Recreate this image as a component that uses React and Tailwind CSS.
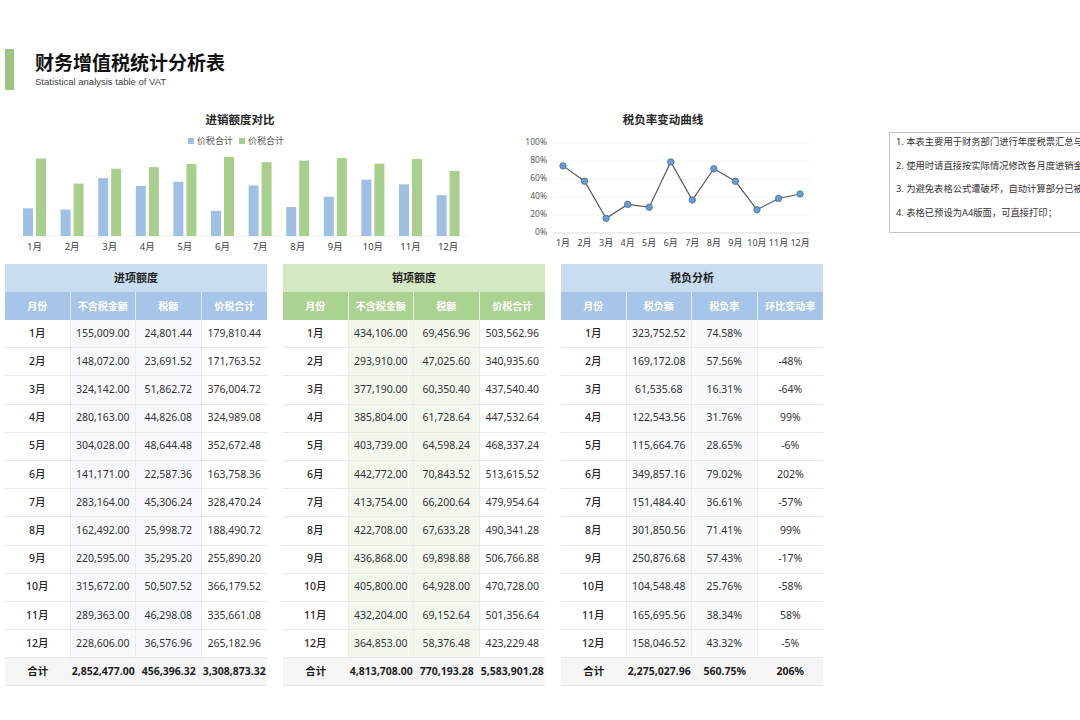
import React from "react";

const inRows = [
  ["1月", "155,009.00", "24,801.44", "179,810.44"],
  ["2月", "148,072.00", "23,691.52", "171,763.52"],
  ["3月", "324,142.00", "51,862.72", "376,004.72"],
  ["4月", "280,163.00", "44,826.08", "324,989.08"],
  ["5月", "304,028.00", "48,644.48", "352,672.48"],
  ["6月", "141,171.00", "22,587.36", "163,758.36"],
  ["7月", "283,164.00", "45,306.24", "328,470.24"],
  ["8月", "162,492.00", "25,998.72", "188,490.72"],
  ["9月", "220,595.00", "35,295.20", "255,890.20"],
  ["10月", "315,672.00", "50,507.52", "366,179.52"],
  ["11月", "289,363.00", "46,298.08", "335,661.08"],
  ["12月", "228,606.00", "36,576.96", "265,182.96"],
];
const inTotal = ["合计", "2,852,477.00", "456,396.32", "3,308,873.32"];

const outRows = [
  ["1月", "434,106.00", "69,456.96", "503,562.96"],
  ["2月", "293,910.00", "47,025.60", "340,935.60"],
  ["3月", "377,190.00", "60,350.40", "437,540.40"],
  ["4月", "385,804.00", "61,728.64", "447,532.64"],
  ["5月", "403,739.00", "64,598.24", "468,337.24"],
  ["6月", "442,772.00", "70,843.52", "513,615.52"],
  ["7月", "413,754.00", "66,200.64", "479,954.64"],
  ["8月", "422,708.00", "67,633.28", "490,341.28"],
  ["9月", "436,868.00", "69,898.88", "506,766.88"],
  ["10月", "405,800.00", "64,928.00", "470,728.00"],
  ["11月", "432,204.00", "69,152.64", "501,356.64"],
  ["12月", "364,853.00", "58,376.48", "423,229.48"],
];
const outTotal = ["合计", "4,813,708.00", "770,193.28", "5,583,901.28"];

const taxRows = [
  ["1月", "323,752.52", "74.58%", ""],
  ["2月", "169,172.08", "57.56%", "-48%"],
  ["3月", "61,535.68", "16.31%", "-64%"],
  ["4月", "122,543.56", "31.76%", "99%"],
  ["5月", "115,664.76", "28.65%", "-6%"],
  ["6月", "349,857.16", "79.02%", "202%"],
  ["7月", "151,484.40", "36.61%", "-57%"],
  ["8月", "301,850.56", "71.41%", "99%"],
  ["9月", "250,876.68", "57.43%", "-17%"],
  ["10月", "104,548.48", "25.76%", "-58%"],
  ["11月", "165,695.56", "38.34%", "58%"],
  ["12月", "158,046.52", "43.32%", "-5%"],
];
const taxTotal = ["合计", "2,275,027.96", "560.75%", "206%"];

const months = ["1月", "2月", "3月", "4月", "5月", "6月", "7月", "8月", "9月", "10月", "11月", "12月"];
const inSum = [179810.44, 171763.52, 376004.72, 324989.08, 352672.48, 163758.36, 328470.24, 188490.72, 255890.2, 366179.52, 335661.08, 265182.96];
const outSum = [503562.96, 340935.6, 437540.4, 447532.64, 468337.24, 513615.52, 479954.64, 490341.28, 506766.88, 470728.0, 501356.64, 423229.48];
const rates = [74.58, 57.56, 16.31, 31.76, 28.65, 79.02, 36.61, 71.41, 57.43, 25.76, 38.34, 43.32];

function BarChart() {
  const base = 88;
  const scale = 79 / 513615;
  return (
    <div className="w-[460px]">
      <div className="text-center text-[11.5px] font-bold leading-[20px] text-[#262626]">进销额度对比</div>
      <div className="mt-[4px] flex h-[14px] items-center justify-center gap-[6px] pr-[8px] text-[9px] text-[#595959]">
        <span className="flex items-center gap-[3px]">
          <span className="h-[6px] w-[6px] bg-[#9fbfe3]" />
          价税合计
        </span>
        <span className="flex items-center gap-[3px]">
          <span className="h-[6px] w-[6px] bg-[#a9cf8c]" />
          价税合计
        </span>
      </div>
      <svg width="460" height="110" className="block">
        <line x1="6" x2="458" y1={base} y2={base} stroke="#ececec" strokeWidth="1" />
        {months.map((m, i) => {
          const c = 24.5 + i * 37.6;
          const hb = inSum[i] * scale;
          const hg = outSum[i] * scale;
          return (
            <g key={m}>
              <rect x={c - 11.5} y={base - hb} width="10" height={hb} fill="#9fbfe3" />
              <rect x={c + 1.5} y={base - hg} width="10" height={hg} fill="#a9cf8c" />
              <text x={c} y={base + 11} textAnchor="middle" dominantBaseline="middle" fontSize="9.5" fill="#404040">
                {m}
              </text>
            </g>
          );
        })}
      </svg>
    </div>
  );
}

function LineChart() {
  const px = (i) => 48 + i * 21.55;
  const py = (v) => 103 - v * 0.9;
  const pts = rates.map((v, i) => `${px(i)},${py(v)}`).join(" ");
  return (
    <div className="ml-[45px] w-[300px]">
      <div className="pr-[4px] text-center text-[11.5px] font-bold leading-[20px] text-[#262626]">税负率变动曲线</div>
      <svg width="300" height="125" className="block">
        {[0, 20, 40, 60, 80, 100].map((v) => (
          <g key={v}>
            {v > 0 && <line x1="38" x2="295" y1={py(v)} y2={py(v)} stroke="#f4f4f4" strokeWidth="1" />}
            <text x="32" y={py(v)} textAnchor="end" dominantBaseline="middle" fontSize="8.5" fill="#595959">
              {v}%
            </text>
          </g>
        ))}
        <line x1="38" x2="295" y1={py(0)} y2={py(0)} stroke="#d9d9d9" strokeWidth="1" />
        <polyline points={pts} fill="none" stroke="#5a5a5a" strokeWidth="1.2" />
        {rates.map((v, i) => (
          <circle key={i} cx={px(i)} cy={py(v)} r="3.2" fill="#6b9bcf" stroke="#41719c" strokeWidth="0.8" />
        ))}
        {months.map((m, i) => (
          <text key={m} x={px(i)} y="114" textAnchor="middle" dominantBaseline="middle" fontSize="9" fill="#404040">
            {m}
          </text>
        ))}
      </svg>
    </div>
  );
}

function Notes() {
  const lines = [
    "1. 本表主要用于财务部门进行年度税票汇总与统计分析；",
    "2. 使用时请直接按实际情况修改各月度进销金额数据；",
    "3. 为避免表格公式遭破坏，自动计算部分已被锁定保护；",
    "4. 表格已预设为A4版面，可直接打印；",
  ];
  return (
    <div className="ml-[74px] mt-[22px] h-[101px] w-[230px] shrink-0 border border-[#c4c4c4] pl-[6px] pt-[2px]">
      {lines.map((l) => (
        <p key={l} className="mb-[9.7px] whitespace-nowrap text-[9.3px] leading-[14px] text-[#333]">
          {l}
        </p>
      ))}
    </div>
  );
}

function DataTable({ title, heads, rows, total, light, dark, tint }) {
  return (
    <div className="w-[262px] shrink-0">
      <div className={`flex h-[28px] items-center justify-center text-[11px] font-bold text-[#1f1f1f] ${light}`}>{title}</div>
      <div className={`grid h-[28px] grid-cols-4 ${dark}`}>
        {heads.map((h, i) => (
          <div
            key={h}
            className={`flex items-center justify-center text-[10px] font-bold text-white ${i < 3 ? "border-r border-white/70" : ""}`}
          >
            {h}
          </div>
        ))}
      </div>
      {rows.map((r) => (
        <div key={r[0]} className="grid h-[28.2px] grid-cols-4 border-b border-[#e8e8e8] text-[10.5px] text-[#333]">
          {r.map((c, i) => (
            <div
              key={i}
              className={`flex items-center justify-center ${i < 3 ? "border-r border-[#ececec]" : ""} ${
                i === 0 ? "font-medium text-[#262626]" : ""
              } ${i === 1 || i === 2 ? tint : ""}`}
            >
              {c}
            </div>
          ))}
        </div>
      ))}
      <div className="grid h-[28.2px] grid-cols-4 border-b border-[#e8e8e8] bg-[#f4f5f4] text-[10.5px] font-bold text-[#1f1f1f]">
        {total.map((c, i) => (
          <div key={i} className="flex items-center justify-center">
            {c}
          </div>
        ))}
      </div>
    </div>
  );
}

export default function App() {
  return (
    <div className="h-[720px] w-[1080px] overflow-hidden bg-white font-['Noto_Sans','Noto_Sans_CJK_SC',sans-serif]">
      <div className="flex items-center pt-[49px]">
        <div className="ml-[5px] h-[41px] w-[9px] bg-[#9cc57f]" />
        <div className="ml-[21px]">
          <h1 className="text-[19px] font-bold leading-[24px] text-[#111]">财务增值税统计分析表</h1>
          <p className="mt-[1px] text-[9.5px] leading-[12px] text-[#444] font-['Liberation_Sans',sans-serif]">
            Statistical analysis table of VAT
          </p>
        </div>
      </div>

      <div className="mt-[20px] flex h-[148px] items-start pl-[10px]">
        <BarChart />
        <LineChart />
        <Notes />
      </div>

      <div className="ml-[5px] mt-[6px] flex gap-4">
        <DataTable
          title="进项额度"
          heads={["月份", "不含税金额", "税额", "价税合计"]}
          rows={inRows}
          total={inTotal}
          light="bg-[#c9ddf1]"
          dark="bg-[#a6c5e8]"
          tint="bg-[#f6f8fb]"
        />
        <DataTable
          title="销项额度"
          heads={["月份", "不含税金额", "税额", "价税合计"]}
          rows={outRows}
          total={outTotal}
          light="bg-[#d3e8c3]"
          dark="bg-[#acd292]"
          tint="bg-[#f1f7ec]"
        />
        <DataTable
          title="税负分析"
          heads={["月份", "税负额", "税负率", "环比变动率"]}
          rows={taxRows}
          total={taxTotal}
          light="bg-[#c9ddf1]"
          dark="bg-[#a6c5e8]"
          tint="bg-[#f8f9fb]"
        />
      </div>
    </div>
  );
}
